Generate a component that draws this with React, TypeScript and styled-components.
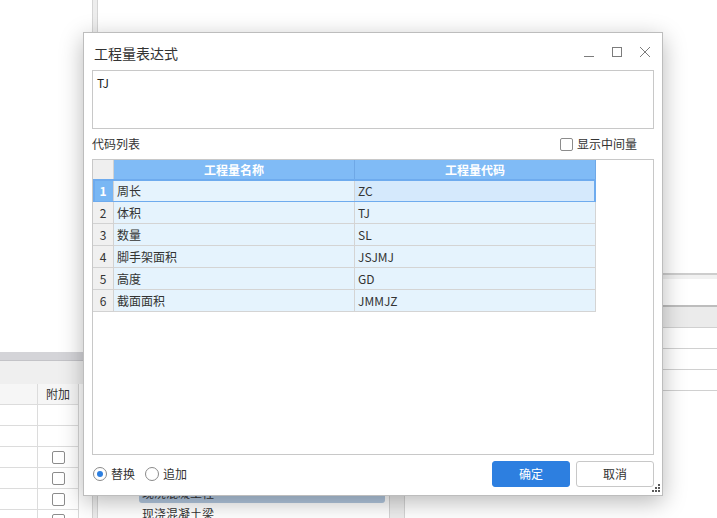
import React from 'react';
import styled, { createGlobalStyle } from 'styled-components';

const GlobalStyle = createGlobalStyle`
  html, body {
    margin: 0;
    padding: 0;
    background: #fff;
  }
  body {
    font-family: "Noto Sans CJK SC", "Noto Sans", sans-serif;
    font-size: 12px;
    color: #333;
  }
  * {
    box-sizing: border-box;
  }
`;

const Screen = styled.div`
  position: relative;
  width: 717px;
  height: 518px;
  overflow: hidden;
  display: flex;
  background: #fff;
`;

/* ---------- background window ---------- */

const LeftPane = styled.div`
  width: 92px;
  flex-shrink: 0;
  display: flex;
  flex-direction: column;
  overflow: hidden;
  & > * {
    flex-shrink: 0;
  }
`;

const PaneBlank = styled.div<{ $h: number }>`
  height: ${p => p.$h}px;
  flex-shrink: 0;
`;

const ToolStrip = styled.div`
  height: 9px;
  width: 84px;
  background: #d4d4d8;
  border-bottom: 1px solid #c3c3c7;
`;

const PaneHeader = styled.div`
  height: 23px;
  width: 84px;
  background: #efefef;
`;

const SideTable = styled.div`
  width: 79px;
  border-right: 1px solid #d8d8d8;
`;

const SideRow = styled.div<{ $head?: boolean }>`
  display: grid;
  grid-template-columns: 38px 40px;
  height: 21px;
  border-bottom: 1px solid #dcdcdc;
  background: ${p => (p.$head ? '#f6f6f6' : '#fff')};
`;

const SideCell = styled.div`
  display: flex;
  align-items: center;
  justify-content: center;
  border-right: 1px solid #dcdcdc;
  line-height: 16px;
  &:last-child {
    border-right: none;
  }
`;

const Box = styled.span`
  display: inline-block;
  width: 13px;
  height: 13px;
  border: 1px solid #8c8c8c;
  border-radius: 2px;
  background: #fff;
`;

const Splitter = styled.div<{ $w: number; $top?: number }>`
  width: ${p => p.$w}px;
  flex-shrink: 0;
  margin-top: ${p => p.$top ?? 0}px;
  background: #ededed;
  border-left: 1px solid #d4d4d4;
  border-right: 1px solid #d4d4d4;
`;

const MiddlePane = styled.div`
  width: 291px;
  flex-shrink: 0;
  display: flex;
  flex-direction: column;
  justify-content: flex-end;
`;

const TreeList = styled.div`
  margin-bottom: -6px;
  padding-left: 41px;
  padding-right: 4px;
`;

const TreeItem = styled.div<{ $active?: boolean }>`
  height: 21px;
  line-height: 21px;
  padding-left: 3px;
  border-radius: 3px;
  color: #333;
  background: ${p => (p.$active ? '#b3c8df' : 'transparent')};
`;

const RightPane = styled.div`
  flex: 1;
  display: flex;
  flex-direction: column;
`;

const SectionBar = styled.div`
  height: 6px;
  border-top: 2px solid #cdcdcd;
  background: #f1f1f1;
`;

const HeaderBand = styled.div`
  height: 23px;
  border-top: 2px solid #bdbdbd;
  border-bottom: 1px solid #d0d0d0;
  background: #ebebeb;
`;

const ListRow = styled.div`
  height: 21px;
  border-bottom: 1px solid #d0d0d0;
`;

/* ---------- dialog ---------- */

const Dialog = styled.div`
  position: absolute;
  left: 83px;
  top: 32px;
  width: 580px;
  height: 464px;
  background: #fff;
  border: 1px solid #bdbdbd;
  box-shadow: 0 6px 22px rgba(0, 0, 0, 0.28);
  padding: 0 8px 8px 8px;
  display: flex;
  flex-direction: column;
`;

const TitleBar = styled.div`
  height: 37px;
  display: flex;
  align-items: center;
  justify-content: space-between;
  padding-left: 2px;
`;

const Title = styled.div`
  font-size: 14px;
  color: #333;
  padding-top: 3px;
  line-height: 20px;
`;

const Controls = styled.div`
  display: flex;
  gap: 18px;
  padding-right: 4px;
  color: #7c7c7c;
`;

const ExprBox = styled.div`
  height: 59px;
  border: 1px solid #c8c8c8;
  padding: 4px 4px;
  line-height: 16px;
  color: #222;
`;

const LabelRow = styled.div`
  height: 30px;
  display: flex;
  align-items: center;
  justify-content: space-between;
  padding-right: 17px;
  line-height: 16px;
`;

const CheckLabel = styled.label`
  display: flex;
  align-items: center;
  gap: 4px;
`;

const GridBox = styled.div`
  height: 296px;
  border: 1px solid #c8c8c8;
`;

const GridRow = styled.div<{ $selected?: boolean }>`
  position: relative;
  display: grid;
  grid-template-columns: 21px 241px 241px;
  width: 503px;
  height: 22px;

  ${p =>
    p.$selected &&
    `
    &::after {
      content: '';
      position: absolute;
      left: 0;
      top: -1px;
      right: 0;
      bottom: -1px;
      border: 2px solid #6eabee;
      pointer-events: none;
    }
  `}
`;

const HeadRow = styled(GridRow)`
  height: 20px;
`;

const HeadCell = styled.div<{ $corner?: boolean }>`
  display: flex;
  align-items: center;
  justify-content: center;
  font-weight: bold;
  color: #fff;
  line-height: 16px;
  background: ${p => (p.$corner ? '#efefef' : '#80bbf6')};
  border-right: 1px solid ${p => (p.$corner ? '#d2d2d2' : '#6fa8e6')};
  border-bottom: 1px solid ${p => (p.$corner ? '#d2d2d2' : '#6fa8e6')};
`;

const NumCell = styled.div<{ $active?: boolean }>`
  display: flex;
  align-items: center;
  justify-content: center;
  line-height: 16px;
  background: ${p => (p.$active ? '#79b7f4' : '#f0f0f0')};
  color: ${p => (p.$active ? '#fff' : '#333')};
  font-weight: ${p => (p.$active ? 'bold' : 'normal')};
  border-right: 1px solid #d2d2d2;
  border-bottom: 1px solid #d2d2d2;
`;

const Cell = styled.div<{ $current?: boolean }>`
  display: flex;
  align-items: center;
  padding-left: 3px;
  line-height: 16px;
  color: #333;
  background: ${p => (p.$current ? '#d5e9fc' : '#e5f3fd')};
  border-right: 1px solid #d4d4d4;
  border-bottom: 1px solid #d4d4d4;
`;

const Footer = styled.div`
  flex: 1;
  display: flex;
  align-items: flex-end;
  justify-content: space-between;
`;

const RadioGroup = styled.div`
  height: 26px;
  display: flex;
  align-items: center;
  gap: 10px;
  padding-left: 1px;
  line-height: 16px;
`;

const RadioLabel = styled.label`
  display: flex;
  align-items: center;
  gap: 4px;
`;

const RadioDot = styled.span<{ $on?: boolean }>`
  width: 14px;
  height: 14px;
  border-radius: 50%;
  border: 1px solid #8a8a8a;
  display: flex;
  align-items: center;
  justify-content: center;
  background: #fff;

  &::after {
    content: '';
    width: 6px;
    height: 6px;
    border-radius: 50%;
    background: ${p => (p.$on ? '#2d7fe0' : 'transparent')};
  }
`;

const Buttons = styled.div`
  display: flex;
  gap: 6px;
`;

const Button = styled.button<{ $primary?: boolean }>`
  width: 78px;
  height: 26px;
  border-radius: 3px;
  font-family: inherit;
  font-size: 12px;
  line-height: 16px;
  padding: 0;
  cursor: pointer;
  border: 1px solid ${p => (p.$primary ? '#2d7fe0' : '#c8c8c8')};
  background: ${p => (p.$primary ? '#2d7fe0' : '#fff')};
  color: ${p => (p.$primary ? '#fff' : '#333')};
`;

const Grip = styled.svg`
  position: absolute;
  right: 2px;
  bottom: 3px;
`;

const rows = [
  { name: '周长', code: 'ZC' },
  { name: '体积', code: 'TJ' },
  { name: '数量', code: 'SL' },
  { name: '脚手架面积', code: 'JSJMJ' },
  { name: '高度', code: 'GD' },
  { name: '截面面积', code: 'JMMJZ' },
];

const App: React.FC = () => {
  return (
    <>
      <GlobalStyle />
      <Screen>
        <LeftPane>
          <PaneBlank $h={352} />
          <ToolStrip />
          <PaneHeader />
          <SideTable>
            <SideRow $head>
              <SideCell />
              <SideCell>附加</SideCell>
            </SideRow>
            {[false, false, true, true, true, true].map((box, i) => (
              <SideRow key={i}>
                <SideCell />
                <SideCell>{box && <Box />}</SideCell>
              </SideRow>
            ))}
          </SideTable>
        </LeftPane>
        <Splitter $w={6} />
        <MiddlePane>
          <TreeList>
            <TreeItem $active>现浇混凝土柱</TreeItem>
            <TreeItem>现浇混凝土梁</TreeItem>
          </TreeList>
        </MiddlePane>
        <Splitter $w={16} $top={300} />
        <RightPane>
          <PaneBlank $h={273} />
          <SectionBar />
          <PaneBlank $h={26} />
          <HeaderBand />
          <ListRow />
          <ListRow />
          <ListRow />
        </RightPane>

        <Dialog>
          <TitleBar>
            <Title>工程量表达式</Title>
            <Controls>
              <svg width="10" height="10" viewBox="0 0 10 10">
                <line x1="0" y1="9.5" x2="10" y2="9.5" stroke="currentColor" strokeWidth="1" />
              </svg>
              <svg width="10" height="10" viewBox="0 0 10 10">
                <rect x="0.5" y="0.5" width="9" height="9" fill="none" stroke="currentColor" strokeWidth="1" />
              </svg>
              <svg width="10" height="10" viewBox="0 0 10 10">
                <path d="M0 0 L10 10 M10 0 L0 10" stroke="currentColor" strokeWidth="1" />
              </svg>
            </Controls>
          </TitleBar>
          <ExprBox>TJ</ExprBox>
          <LabelRow>
            <span>代码列表</span>
            <CheckLabel>
              <Box />
              显示中间量
            </CheckLabel>
          </LabelRow>
          <GridBox>
            <HeadRow>
              <HeadCell $corner />
              <HeadCell>工程量名称</HeadCell>
              <HeadCell>工程量代码</HeadCell>
            </HeadRow>
            {rows.map((r, i) => (
              <GridRow key={r.code} $selected={i === 0}>
                <NumCell $active={i === 0}>{i + 1}</NumCell>
                <Cell>{r.name}</Cell>
                <Cell $current={i === 0}>{r.code}</Cell>
              </GridRow>
            ))}
          </GridBox>
          <Footer>
            <RadioGroup>
              <RadioLabel>
                <RadioDot $on />
                替换
              </RadioLabel>
              <RadioLabel>
                <RadioDot />
                追加
              </RadioLabel>
            </RadioGroup>
            <Buttons>
              <Button $primary>确定</Button>
              <Button>取消</Button>
            </Buttons>
          </Footer>
          <Grip width="8" height="8" viewBox="0 0 8 8" fill="#5a5a5a">
            <rect x="6" y="0" width="2" height="2" />
            <rect x="3" y="3" width="2" height="2" />
            <rect x="6" y="3" width="2" height="2" />
            <rect x="0" y="6" width="2" height="2" />
            <rect x="3" y="6" width="2" height="2" />
            <rect x="6" y="6" width="2" height="2" />
          </Grip>
        </Dialog>
      </Screen>
    </>
  );
};

export default App;
